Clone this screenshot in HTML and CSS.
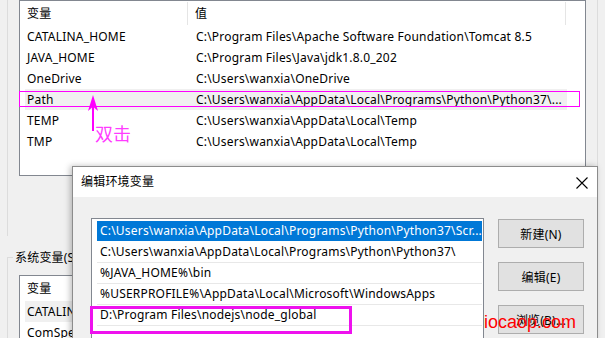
FILE: index.html
```html
<!DOCTYPE html>
<html lang="zh-CN">
<head>
<meta charset="utf-8">
<title>编辑环境变量</title>
<link rel="stylesheet" href="styles.css">
</head>
<body>
<div class="screen">
  <div class="main">
    <div class="user-group">
      <div class="listview upper">
        <div class="lv-head">
          <div class="c1">变量</div>
          <div class="c2">值</div>
        </div>
        <div class="lv-row"><div class="c1">CATALINA_HOME</div><div class="c2">C:\Program Files\Apache Software Foundation\Tomcat 8.5</div></div>
        <div class="lv-row"><div class="c1">JAVA_HOME</div><div class="c2">C:\Program Files\Java\jdk1.8.0_202</div></div>
        <div class="lv-row"><div class="c1">OneDrive</div><div class="c2">C:\Users\wanxia\OneDrive</div></div>
        <div class="lv-row sel"><div class="c1">Path</div><div class="c2">C:\Users\wanxia\AppData\Local\Programs\Python\Python37\...</div></div>
        <div class="lv-row"><div class="c1">TEMP</div><div class="c2">C:\Users\wanxia\AppData\Local\Temp</div></div>
        <div class="lv-row"><div class="c1">TMP</div><div class="c2">C:\Users\wanxia\AppData\Local\Temp</div></div>
      </div>
    </div>
    <fieldset class="sys-group">
      <legend>系统变量(S)</legend>
      <div class="listview lower">
        <div class="lv-head">
          <div class="c1">变量</div>
          <div class="c2">值</div>
        </div>
        <div class="lv-row sel"><div class="c1">CATALINA_HOME</div><div class="c2"></div></div>
        <div class="lv-row"><div class="c1">ComSpec</div><div class="c2"></div></div>
      </div>
    </fieldset>
  </div>
  <div class="edge"><div class="edge-line"></div></div>

  <div class="mark-path"></div>
  <svg class="arrow" width="14" height="40" viewBox="0 0 14 40">
    <path d="M7 0 L12 16 L8 12.5 L8 36 L6 36 L6 12.5 L2 16 Z" fill="#f0f"/>
  </svg>
  <div class="note">双击</div>

  <div class="dialog">
    <div class="dlg-title">
      <span>编辑环境变量</span>
      <svg class="close" width="12" height="12" viewBox="0 0 12 12">
        <path d="M0.5 0.5 L11.5 11.5 M11.5 0.5 L0.5 11.5" stroke="#000" stroke-width="1.1" fill="none"/>
      </svg>
    </div>
    <div class="dlg-body">
      <div class="pathlist">
        <div class="p-row active">C:\Users\wanxia\AppData\Local\Programs\Python\Python37\Scr...</div>
        <div class="p-row">C:\Users\wanxia\AppData\Local\Programs\Python\Python37\</div>
        <div class="p-row">%JAVA_HOME%\bin</div>
        <div class="p-row">%USERPROFILE%\AppData\Local\Microsoft\WindowsApps</div>
        <div class="p-row">D:\Program Files\nodejs\node_global</div>
        <div class="p-row"></div>
      </div>
      <div class="buttons">
        <div class="btn">新建(N)</div>
        <div class="btn">编辑(E)</div>
        <div class="btn">浏览(B)...</div>
      </div>
    </div>
    <div class="mark-node"></div>
  </div>

  <div class="watermark">iocaop.com</div>
</div>
</body>
</html>
```

FILE: styles.css
```css
* { box-sizing: border-box; }
html, body { margin: 0; padding: 0; }
body {
  background: #f0f0f0;
  font-family: "Noto Sans", "Noto Sans CJK SC", sans-serif;
  font-size: 12px;
  letter-spacing: 0.2px;
  color: #000;
}
.screen {
  position: relative;
  width: 605px;
  height: 338px;
  overflow: hidden;
  display: flex;
  background: #f0f0f0;
}
.main { width: 586px; flex: none; }
.edge { flex: 1; display: flex; }
.edge-line {
  width: 12px;
  border-right: 1px solid #dcdcdc;
}

.user-group {
  margin-left: 7px;
  border-left: 1px solid #dcdcdc;
  padding-left: 11px;
  height: 236px;
}
.listview {
  background: #fff;
  border: 1px solid #828790;
  padding-left: 5px;
  width: 567px;
}
.listview.upper { height: 176px; }
.listview.lower { height: 80px; }
.lv-head {
  display: flex;
  height: 25px;
  align-items: center;
}
.lv-head .c1 {
  width: 163px;
  padding-left: 2px;
  border-right: 1px solid #e5e5e5;
  height: 23px;
  line-height: 23px;
}
.lv-head .c2 {
  width: 378px;
  padding-left: 7px;
  border-right: 1px solid #e5e5e5;
  height: 23px;
  line-height: 23px;
}
.lv-row {
  display: flex;
  width: 542px;
  height: 21px;
  line-height: 21px;
  white-space: nowrap;
}
.lv-row.sel { background: #f0f0f0; }
.lv-row .c1 { width: 164px; padding-left: 2px; }
.lv-row .c2 { flex: 1; padding-left: 7px; overflow: hidden; }

.sys-group {
  margin: 13px 0 0 7px;
  border: 1px solid #dcdcdc;
  border-right: none;
  border-bottom: none;
  padding: 9px 0 0 11px;
  height: 120px;
  min-width: 0;
}
.sys-group legend {
  margin-left: -6px;
  padding: 0 2px;
  line-height: 17px;
}

.mark-path {
  position: absolute;
  left: 19px;
  top: 91px;
  width: 561px;
  height: 16px;
  border: 1px solid #f0f;
}
.arrow {
  position: absolute;
  left: 86px;
  top: 95px;
}
.note {
  position: absolute;
  left: 95px;
  top: 122px;
  font-size: 18px;
  line-height: 24px;
  letter-spacing: 0;
  color: #ff3cff;
}

.dialog {
  position: absolute;
  left: 72px;
  top: 166px;
  width: 526px;
  height: 200px;
  border: 1px solid #8c8c8c;
  background: #f0f0f0;
  box-shadow: -2px 0 6px rgba(0,0,0,0.25);
}
.dlg-title {
  height: 30px;
  background: #fff;
  display: flex;
  align-items: center;
  justify-content: space-between;
  padding: 0 9px 0 8px;
}
.dlg-title span { line-height: 18px; }
.close { margin-top: 1px; }
.dlg-body {
  display: flex;
  padding: 21px 0 0 18px;
}
.pathlist {
  width: 393px;
  height: 130px;
  background: #fff;
  border: 1px solid #828790;
  padding: 2px 1px 0 5px;
}
.p-row {
  height: 21px;
  line-height: 20px;
  padding-left: 3px;
  border-bottom: 1px solid #e8e8e8;
  white-space: nowrap;
  overflow: hidden;
}
.p-row.active {
  background: #0078d7;
  color: #fff;
  border-bottom-color: #fff;
}
.buttons {
  margin-left: 14px;
  padding-top: 1px;
  display: flex;
  flex-direction: column;
  gap: 14px;
}
.btn {
  width: 86px;
  height: 29px;
  background: #e1e1e1;
  border: 1px solid #adadad;
  display: flex;
  align-items: center;
  justify-content: center;
}
.mark-node {
  position: absolute;
  left: 17px;
  top: 139px;
  width: 262px;
  height: 28px;
  border: 3px solid #ee11ee;
}
.watermark {
  position: absolute;
  left: 484px;
  top: 310px;
  font-family: "Liberation Sans", Arial, sans-serif;
  font-size: 18px;
  line-height: 24px;
  letter-spacing: 0;
  color: #f00;
}
```
